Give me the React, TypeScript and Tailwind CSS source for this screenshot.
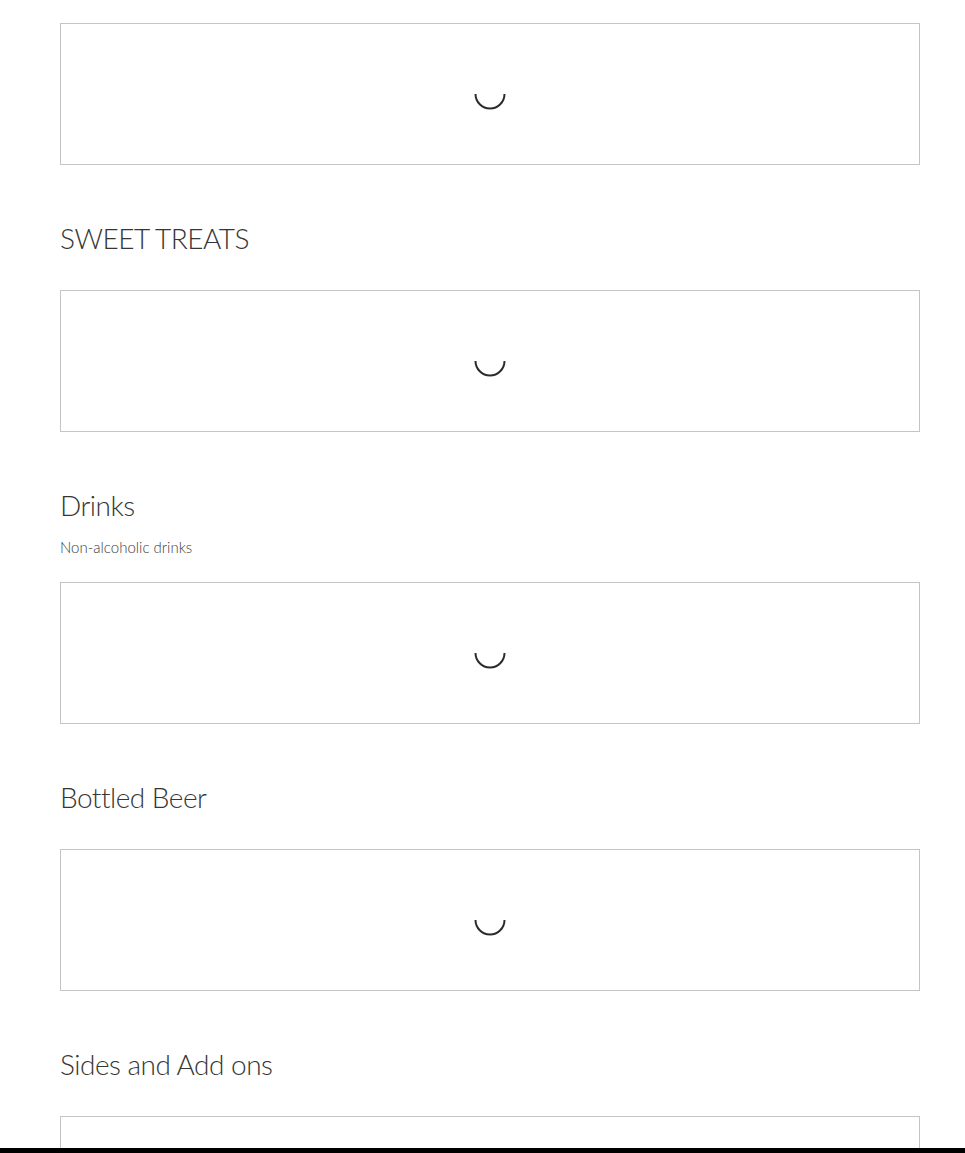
import React from "react";

function Spinner() {
  return (
    <svg width="34" height="34" viewBox="0 0 34 34" className="block">
      <path d="M2.5 17 A14.5 14.5 0 0 0 31.5 17" fill="none" stroke="#2b2b2b" strokeWidth="2" />
    </svg>
  );
}

function Box() {
  return (
    <div className="h-[142px] border border-[#c4c4c4] flex items-center justify-center">
      <Spinner />
    </div>
  );
}

function Section({ title, desc }: { title: string; desc?: string }) {
  return (
    <section className="pt-[53px]">
      <h2 className="text-[28px] leading-[40px] font-light tracking-[-0.5px] text-[#363636]">{title}</h2>
      {desc && <p className="mt-[12px] text-[15px] leading-[20px] font-light text-[#3c3c3c]">{desc}</p>}
      <div className={desc ? "mt-[25px]" : "mt-[32px]"}>
        <Box />
      </div>
    </section>
  );
}

export default function App() {
  return (
    <div className="h-[1153px] overflow-hidden bg-white" style={{ fontFamily: "Lato, 'Open Sans', sans-serif" }}>
      <div className="ml-[60px] w-[860px] -mt-[62px] pb-[40px]">
        <Section title="" />
        <Section title="SWEET TREATS" />
        <Section title="Drinks" desc="Non-alcoholic drinks" />
        <Section title="Bottled Beer" />
        <Section title="Sides and Add ons" />
      </div>
      <div className="fixed bottom-0 left-0 right-0 h-[5px] bg-black" />
    </div>
  );
}
